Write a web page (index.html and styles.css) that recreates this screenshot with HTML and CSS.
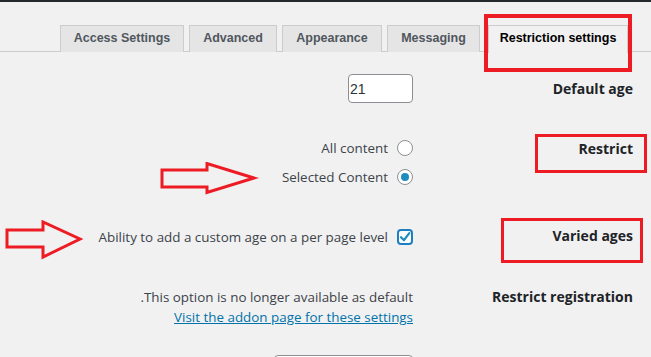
FILE: index.html
```html
<!DOCTYPE html>
<html lang="en">
<head>
<meta charset="utf-8">
<title>Restriction settings</title>
<link rel="stylesheet" href="styles.css">
</head>
<body>
<div class="topbar"></div>
<div class="page">
  <nav class="tabs">
    <a class="tab">Access Settings</a>
    <a class="tab">Advanced</a>
    <a class="tab">Appearance</a>
    <a class="tab">Messaging</a>
    <a class="tab active">Restriction settings</a>
  </nav>

  <div class="form">
    <div class="row row-age">
      <div class="field"><input class="num" type="text" value="21"></div>
      <div class="label">Default age</div>
    </div>

    <div class="row row-restrict">
      <div class="field">
        <div class="opt"><span>All content</span><span class="radio"></span></div>
        <div class="opt"><span>Selected Content</span><span class="radio on"></span></div>
      </div>
      <div class="label">Restrict</div>
    </div>

    <div class="row row-varied">
      <div class="field">
        <div class="opt"><span>Ability to add a custom age on a per page level</span>
          <span class="check"><svg width="12" height="12" viewBox="0 0 12 12"><path d="M2 6.2 L5 9.2 L10.3 2.2" fill="none" stroke="#1e8cbe" stroke-width="2.2" stroke-linecap="round" stroke-linejoin="round"/></svg></span>
        </div>
      </div>
      <div class="label">Varied ages</div>
    </div>

    <div class="row row-reg">
      <div class="field">
        <div class="note">.This option is no longer available as default</div>
        <a class="link" href="#">Visit the addon page for these settings</a>
      </div>
      <div class="label">Restrict registration</div>
    </div>

    <div class="row row-last">
      <div class="field"><div class="box"></div></div>
      <div class="label"></div>
    </div>
  </div>

  <div class="mark mark-tab"></div>
  <div class="mark mark-restrict"></div>
  <div class="mark mark-varied"></div>

  <svg class="arrow arrow-1" width="100" height="34" viewBox="0 0 100 34">
    <path d="M2 8 H47 V1.5 L94 16 L47 30.5 V25 H2 Z" fill="none" stroke="#ed1c24" stroke-width="3" stroke-linejoin="miter"/>
  </svg>
  <svg class="arrow arrow-2" width="82" height="40" viewBox="0 0 82 40">
    <path d="M6 10 H42 V2 L79 19 L42 37 V27 H6 Z" fill="none" stroke="#ed1c24" stroke-width="3" stroke-linejoin="miter"/>
  </svg>
</div>
</body>
</html>
```

FILE: styles.css
```css
html, body {
  margin: 0;
  padding: 0;
  background: #f1f1f1;
}
body {
  width: 651px;
  height: 357px;
  overflow: hidden;
  font-family: "Open Sans", "Noto Sans", sans-serif;
  color: #3c434a;
}
.topbar {
  height: 2px;
  background: #23282d;
}
.page {
  position: relative;
  height: 355px;
  overflow: hidden;
}
.tabs {
  display: flex;
  gap: 5px;
  padding: 23px 0 0 60px;
  border-bottom: 1px solid #cccccc;
  height: 26px;
}
.tab {
  box-sizing: border-box;
  height: 27px;
  padding: 0 0 2px;
  display: flex;
  align-items: center;
  justify-content: center;
  white-space: nowrap;
  font-family: "Liberation Sans", Arial, sans-serif;
  font-weight: bold;
  font-size: 12.5px;
  color: #50575e;
  background: #e5e5e5;
  border: 1px solid #cccccc;
  border-bottom: none;
}
.tab:nth-child(1) { width: 124px; }
.tab:nth-child(2) { width: 88px; }
.tab:nth-child(3) { width: 100px; }
.tab:nth-child(4) { width: 93px; }
.tab.active {
  width: 140px;
  margin-left: 3px;
  color: #000;
  background: #f1f1f1;
  height: 28px;
  padding-bottom: 3px;
  position: relative;
  z-index: 1;
}
.form {
  display: flex;
  flex-direction: column;
  padding-right: 18px;
}
.row {
  display: grid;
  grid-template-columns: 1fr 220px;
}
.field {
  display: flex;
  flex-direction: column;
  align-items: flex-end;
}
.label {
  text-align: right;
  font-weight: bold;
  font-size: 14px;
  color: #1d2327;
}
.row-age { margin-top: 22px; height: 29px; }
.row-age .label { padding-top: 5px; }
.num {
  box-sizing: border-box;
  width: 65px;
  height: 29px;
  margin: 0;
  padding: 0 1px;
  border: 1px solid #8c8f94;
  border-radius: 4px;
  background: #fff;
  font-family: "Liberation Sans", Arial, sans-serif;
  font-size: 14px;
  color: #2c3338;
}
.opt {
  display: flex;
  align-items: center;
  gap: 9px;
  font-size: 13.4px;
  height: 29px;
}
.row-restrict { margin-top: 30px; }
.row-restrict .label { padding-top: 6px; }
.radio {
  box-sizing: border-box;
  width: 16px;
  height: 16px;
  border-radius: 50%;
  border: 1px solid #8c8f94;
  background: #fff;
  display: flex;
  align-items: center;
  justify-content: center;
}
.radio.on::after {
  content: "";
  width: 8px;
  height: 8px;
  border-radius: 50%;
  background: #1e8cbe;
}
.row-varied { margin-top: 31px; }
.row-varied .label { padding-top: 4px; }
.check {
  box-sizing: border-box;
  width: 16px;
  height: 16px;
  border: 2px solid #1e7fc0;
  border-radius: 4px;
  background: #fff;
  display: flex;
  align-items: center;
  justify-content: center;
}
.row-reg { margin-top: 36px; }
.note {
  font-size: 13.4px;
  line-height: 20px;
}
.link {
  font-size: 13.4px;
  line-height: 20px;
  color: #0073aa;
  text-decoration: underline;
}
.row-reg .label { line-height: 20px; }
.row-last { margin-top: 28px; }
.box {
  box-sizing: border-box;
  width: 139px;
  height: 30px;
  border: 1px solid #8c8f94;
  border-radius: 4px;
  background: #fff;
}
.mark {
  position: absolute;
  box-sizing: border-box;
  border: 4px solid #ed1c24;
}
.mark-tab { left: 484px; top: 12px; width: 148px; height: 58px; }
.mark-restrict { left: 535px; top: 132px; width: 112px; height: 39px; border-width: 3.5px; }
.mark-varied { left: 501px; top: 216px; width: 142px; height: 45px; border-width: 3.5px; }
.arrow { position: absolute; }
.arrow-1 { left: 160px; top: 160px; }
.arrow-2 { left: 1px; top: 218px; }
```
